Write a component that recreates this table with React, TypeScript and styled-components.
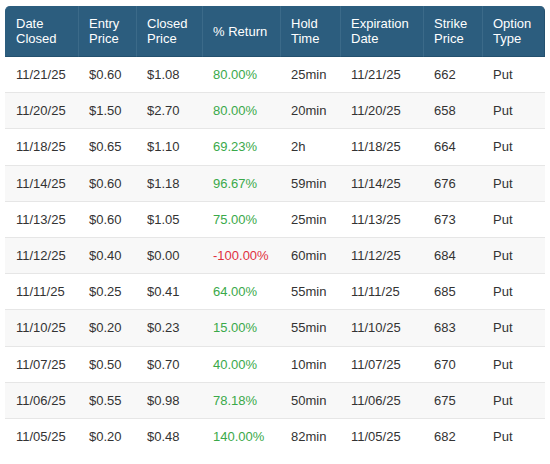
import React from "react";
import styled, { createGlobalStyle } from "styled-components";

const Global = createGlobalStyle`
  html, body { margin: 0; padding: 0; background: #ffffff; }
  body { font-family: "Liberation Sans", Arial, Helvetica, sans-serif; }
`;

const Wrapper = styled.div`
  padding: 6px 5px 0 5px;
`;

const Table = styled.table`
  width: 540px;
  border-collapse: separate;
  border-spacing: 0;
  table-layout: fixed;
  font-size: 13px;
  color: #333333;
`;

const HeadCell = styled.th<{ $first?: boolean; $last?: boolean }>`
  background: #2c5d7e;
  color: #ffffff;
  font-weight: normal;
  text-align: left;
  vertical-align: middle;
  line-height: 15px;
  padding: 10px 6px 10px 10px;
  border-left: 1px solid ${(p) => (p.$first ? "#2c5d7e" : "#3b6a89")};
  border-bottom: 1px solid #23506e;
  border-top-left-radius: ${(p) => (p.$first ? "5px" : "0")};
  border-top-right-radius: ${(p) => (p.$last ? "5px" : "0")};
  ${(p) => (p.$last ? "border-right: 1px solid #24516f;" : "")}
`;

const Row = styled.tr<{ $striped: boolean }>`
  background: ${(p) => (p.$striped ? "#f8f8f8" : "#ffffff")};
`;

const Cell = styled.td<{ $tone?: "up" | "down"; $last?: boolean }>`
  padding: 10px 6px 10px 11px;
  line-height: 15.2px;
  white-space: nowrap;
  border-bottom: 1px solid ${(p) => (p.$last ? "transparent" : "#e6e6e6")};
  color: ${(p) =>
    p.$tone === "up" ? "#3aa94a" : p.$tone === "down" ? "#e0303f" : "#333333"};
`;

const widths = [73, 58, 66, 78, 60, 83, 59, 63];

const headers: [string, string?][] = [
  ["Date", "Closed"],
  ["Entry", "Price"],
  ["Closed", "Price"],
  ["% Return"],
  ["Hold", "Time"],
  ["Expiration", "Date"],
  ["Strike", "Price"],
  ["Option", "Type"],
];

type Trade = {
  date: string;
  entry: string;
  closed: string;
  ret: string;
  hold: string;
  exp: string;
  strike: string;
  type: string;
};

const trades: Trade[] = [
  { date: "11/21/25", entry: "$0.60", closed: "$1.08", ret: "80.00%", hold: "25min", exp: "11/21/25", strike: "662", type: "Put" },
  { date: "11/20/25", entry: "$1.50", closed: "$2.70", ret: "80.00%", hold: "20min", exp: "11/20/25", strike: "658", type: "Put" },
  { date: "11/18/25", entry: "$0.65", closed: "$1.10", ret: "69.23%", hold: "2h", exp: "11/18/25", strike: "664", type: "Put" },
  { date: "11/14/25", entry: "$0.60", closed: "$1.18", ret: "96.67%", hold: "59min", exp: "11/14/25", strike: "676", type: "Put" },
  { date: "11/13/25", entry: "$0.60", closed: "$1.05", ret: "75.00%", hold: "25min", exp: "11/13/25", strike: "673", type: "Put" },
  { date: "11/12/25", entry: "$0.40", closed: "$0.00", ret: "-100.00%", hold: "60min", exp: "11/12/25", strike: "684", type: "Put" },
  { date: "11/11/25", entry: "$0.25", closed: "$0.41", ret: "64.00%", hold: "55min", exp: "11/11/25", strike: "685", type: "Put" },
  { date: "11/10/25", entry: "$0.20", closed: "$0.23", ret: "15.00%", hold: "55min", exp: "11/10/25", strike: "683", type: "Put" },
  { date: "11/07/25", entry: "$0.50", closed: "$0.70", ret: "40.00%", hold: "10min", exp: "11/07/25", strike: "670", type: "Put" },
  { date: "11/06/25", entry: "$0.55", closed: "$0.98", ret: "78.18%", hold: "50min", exp: "11/06/25", strike: "675", type: "Put" },
  { date: "11/05/25", entry: "$0.20", closed: "$0.48", ret: "140.00%", hold: "82min", exp: "11/05/25", strike: "682", type: "Put" },
];

export default function App() {
  return (
    <>
      <Global />
      <Wrapper>
        <Table>
          <colgroup>
            {widths.map((w, i) => (
              <col key={i} style={{ width: w }} />
            ))}
          </colgroup>
          <thead>
            <tr>
              {headers.map((h, i) => (
                <HeadCell key={i} $first={i === 0} $last={i === headers.length - 1}>
                  {h[0]}
                  {h[1] ? (
                    <>
                      <br />
                      {h[1]}
                    </>
                  ) : null}
                </HeadCell>
              ))}
            </tr>
          </thead>
          <tbody>
            {trades.map((t, i) => {
              const last = i === trades.length - 1;
              const tone = t.ret.startsWith("-") ? "down" : "up";
              return (
                <Row key={t.date} $striped={i % 2 === 1}>
                  <Cell $last={last}>{t.date}</Cell>
                  <Cell $last={last}>{t.entry}</Cell>
                  <Cell $last={last}>{t.closed}</Cell>
                  <Cell $last={last} $tone={tone}>{t.ret}</Cell>
                  <Cell $last={last}>{t.hold}</Cell>
                  <Cell $last={last}>{t.exp}</Cell>
                  <Cell $last={last}>{t.strike}</Cell>
                  <Cell $last={last}>{t.type}</Cell>
                </Row>
              );
            })}
          </tbody>
        </Table>
      </Wrapper>
    </>
  );
}
